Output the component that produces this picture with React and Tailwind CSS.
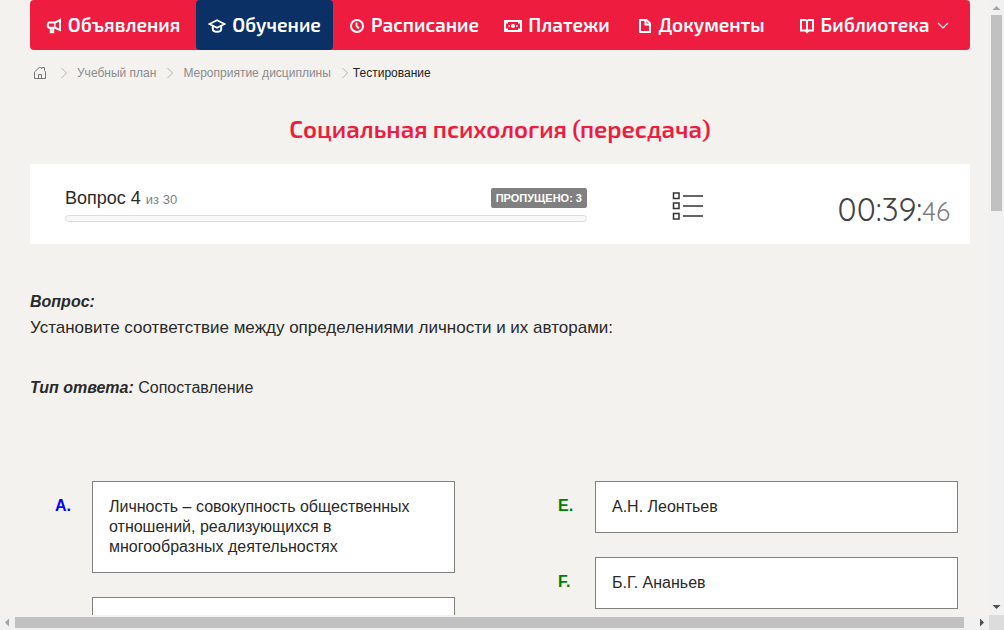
import React from "react";

const stroke = { fill: "none", stroke: "currentColor", strokeWidth: 2 };

function MegaphoneIcon() {
  return (
    <svg width="16" height="16" viewBox="0 0 16 16" {...stroke} className="mt-0.5 shrink-0">
      <path d="M14 2v10L9 9.800H3.500C2 9.800 1.800 8.800 1.800 7.500S2 4.600 3.500 4.600H9L14 2Z" />
      <path d="M4.800 9.800v4.400h2.400V9.800" />
      <path d="M8.800 4.600v5.200" strokeWidth="1.400" />
    </svg>
  );
}

function CapIcon() {
  return (
    <svg width="18" height="16" viewBox="0 0 18 16" {...stroke} className="mt-0.5 shrink-0">
      <path d="M1.500 6 9 2.200 16.500 6 9 9.800Z" strokeWidth="1.800" />
      <path d="M4.800 7.500v3.500c0 1.800 1.700 2.800 4.200 2.800s4.200-1 4.200-2.800V7.500" />
    </svg>
  );
}

function ClockIcon() {
  return (
    <svg width="16" height="16" viewBox="0 0 16 16" {...stroke} className="mt-0.5 shrink-0">
      <circle cx="8" cy="8" r="6" />
      <path d="M7.500 4.500V8l2.500 2.500" strokeWidth="1.800" />
    </svg>
  );
}

function MoneyIcon() {
  return (
    <svg width="18" height="14" viewBox="0 0 18 14" className="mt-0.5 shrink-0">
      <path
        fill="currentColor"
        fillRule="evenodd"
        d="M0 1h18v12H0ZM4 3v1.500H2v5h2V11h10V9.500h2v-5h-2V3Z"
      />
      <circle cx="9" cy="7" r="2" fill="currentColor" />
      <path fill="currentColor" d="M4.500 6.200h1.600v1.600H4.500ZM12 6.200h1.600v1.600H12Z" />
    </svg>
  );
}

function FileIcon() {
  return (
    <svg width="14" height="16" viewBox="0 0 14 16" {...stroke} className="mt-0.5 shrink-0">
      <path d="M2 2h6.500L12 5.500V14H2Z" />
      <path d="M7.500 2v4.500H12" />
    </svg>
  );
}

function BookIcon() {
  return (
    <svg width="16" height="16" viewBox="0 0 16 16" {...stroke} className="mt-0.5 shrink-0">
      <path d="M2 2h4.500L8 3l1.500-1H14v10.500H9.500L8 14l-1.500-1.500H2ZM8 3v11" />
    </svg>
  );
}

function ChevronDown() {
  return (
    <svg width="12" height="8" viewBox="0 0 12 8" fill="none" stroke="currentColor" strokeWidth="1.200" className="mt-0.5 ml-0.5 shrink-0">
      <path d="m1 1 5 5 5-5" />
    </svg>
  );
}

function HomeIcon() {
  return (
    <svg width="14" height="14" viewBox="0 0 14 14" fill="none" stroke="#777" className="block">
      <path d="M1.500 12.500V6L6.200 1.500h1.600L9 2.700V1.500h2.500v3l1 1.500v6.500Z" />
      <path d="M5.500 12.500v-4h3v4" />
    </svg>
  );
}

function ChevronRight() {
  return (
    <svg width="8" height="12" viewBox="0 0 8 12" fill="none" stroke="#b5b5b5" className="shrink-0">
      <path d="m1.500 1 5 5-5 5" />
    </svg>
  );
}

function ListIcon() {
  return (
    <svg width="32" height="30" viewBox="0 0 32 30" fill="none" stroke="#333" className="block">
      <path strokeWidth="1.500" d="M1.500 2h5.500v5.500H1.500ZM1.500 12h5.500v5.500H1.500ZM1.500 22.500h5.500V28H1.500Z" />
      <path strokeWidth="1.300" d="M11 5h20M11 15h20M11 25h20" />
    </svg>
  );
}

const navItems = [
  { label: "Объявления", Icon: MegaphoneIcon },
  { label: "Обучение", Icon: CapIcon, active: true },
  { label: "Расписание", Icon: ClockIcon },
  { label: "Платежи", Icon: MoneyIcon },
  { label: "Документы", Icon: FileIcon },
  { label: "Библиотека", Icon: BookIcon, menu: true },
];

function Nav() {
  return (
    <nav className="grid h-[50px] shrink-0 grid-cols-[166fr_137fr_162fr_124fr_165fr_180fr] overflow-hidden rounded bg-[#ee1c3f] pr-1.5 font-['Exo_2','Open_Sans',sans-serif] text-[19px] font-semibold text-white">
      {navItems.map(({ label, Icon, active, menu }) => (
        <a
          key={label}
          href="#"
          className={
            active
              ? "flex items-center justify-center gap-1.5 rounded bg-[#0a3066] whitespace-nowrap"
              : "flex items-center justify-center gap-1.5 whitespace-nowrap"
          }
        >
          <Icon />
          <span>{label}</span>
          {menu && <ChevronDown />}
        </a>
      ))}
    </nav>
  );
}

function Breadcrumbs() {
  return (
    <nav className="flex h-[46px] items-center pl-[3px] text-[12px] text-[#8c8c8c]">
      <a href="#" aria-label="Главная" className="mr-[13px]"><HomeIcon /></a>
      <ChevronRight />
      <a href="#" className="mr-[10px] ml-[9px]">Учебный план</a>
      <ChevronRight />
      <a href="#" className="mr-[10px] ml-[9px]">Мероприятие дисциплины</a>
      <ChevronRight />
      <span className="ml-1 text-[#222]">Тестирование</span>
    </nav>
  );
}

function StatusCard() {
  return (
    <section className="flex h-20 items-center bg-white pr-5 pl-[35px]">
      <div className="flex-1 pt-px">
        <div className="flex items-end justify-between">
          <div className="text-[18px] leading-4">
            Вопрос 4 <span className="text-[13px] text-[#808080]">из 30</span>
          </div>
          <span className="rounded-[2px] bg-[#808080] px-[5px] text-[11px] leading-5 font-bold text-white">
            ПРОПУЩЕНО: 3
          </span>
        </div>
        <div role="progressbar" aria-label="Прогресс" aria-valuenow={0} className="mt-[7px] h-[7px] rounded border border-[#dcdcdc] bg-[#f8f8f8]" />
      </div>
      <button type="button" aria-label="Список вопросов" className="mt-1 ml-[85px]"><ListIcon /></button>
      <div className="mt-3 w-[246px] text-right font-['Quicksand','Lato',sans-serif] text-[32px] leading-10 font-normal text-[#444]">
        00:39:<span className="text-[26px] text-[#808080]">46</span>
      </div>
    </section>
  );
}

function Choice({ letter, color, children }) {
  return (
    <li className="flex text-[16px] leading-5">
      <b className={`w-[37px] shrink-0 pt-[15px] ${color}`}>{letter}</b>
      <div className="min-h-[52px] flex-1 border border-[#808080] bg-white px-4 py-[15px]">{children}</div>
    </li>
  );
}

function Arrow({ d, color }) {
  return (
    <svg width="15" height="15" viewBox="0 0 15 15" className="block shrink-0"><path d={d} fill={color} /></svg>
  );
}

export default function App() {
  return (
    <div className="grid h-screen grid-cols-[minmax(0,1fr)_15px] grid-rows-[minmax(0,1fr)_15px] bg-[#f3f2ee] font-['Liberation_Sans',Arial,sans-serif] text-[#2a2a2a]">
      <main className="overflow-hidden pr-[19px] pl-[30px]">
        <Nav />
        <Breadcrumbs />
        <h1 className="pt-[17px] pb-[19px] text-center font-['Exo_2','Open_Sans',sans-serif] text-[24px] leading-8 font-semibold text-[#ee1c3f]">
          Социальная психология (пересдача)
        </h1>
        <StatusCard />
        <section className="pt-12">
          <h2 className="text-[16px] leading-5 font-bold italic">Вопрос:</h2>
          <p className="mt-1 text-[17px] leading-6">
            Установите соответствие между определениями личности и их авторами:
          </p>
          <p className="mt-[38px] text-[16px] leading-5">
            <b className="italic">Тип ответа:</b> Сопоставление
          </p>
        </section>
        <div className="mt-[83px] grid grid-cols-2 gap-[103px] pr-3 pl-[25px]">
          <ul className="flex flex-col gap-6">
            <Choice letter="A." color="text-[#0000ff]">
              Личность – совокупность общественных отношений, реализующихся в многообразных деятельностях
            </Choice>
            <Choice letter="" color="text-[#0000ff]" />
          </ul>
          <ul className="flex flex-col gap-6">
            <Choice letter="E." color="text-[#008000]">А.Н. Леонтьев</Choice>
            <Choice letter="F." color="text-[#008000]">Б.Г. Ананьев</Choice>
          </ul>
        </div>
      </main>
      <div className="flex flex-col items-center bg-[#f1f1f1]">
        <Arrow d="M7.500 6 11.500 10h-8Z" color="#a3a3a3" />
        <div className="flex w-full flex-1 flex-col px-[2px]">
          <div className="h-[33.500%] bg-[#c1c1c1]" />
        </div>
        <Arrow d="M3.500 5h8l-4 4Z" color="#505050" />
      </div>
      <div className="flex bg-[#f1f1f1]">
        <Arrow d="M9 3.500v8l-4-4Z" color="#a3a3a3" />
        <div className="flex flex-1 py-[2px]">
          <div className="w-[99%] bg-[#c1c1c1]" />
        </div>
        <Arrow d="M6 3.500v8l4-4Z" color="#505050" />
      </div>
      <div className="bg-[#dcdcdc]" />
    </div>
  );
}
